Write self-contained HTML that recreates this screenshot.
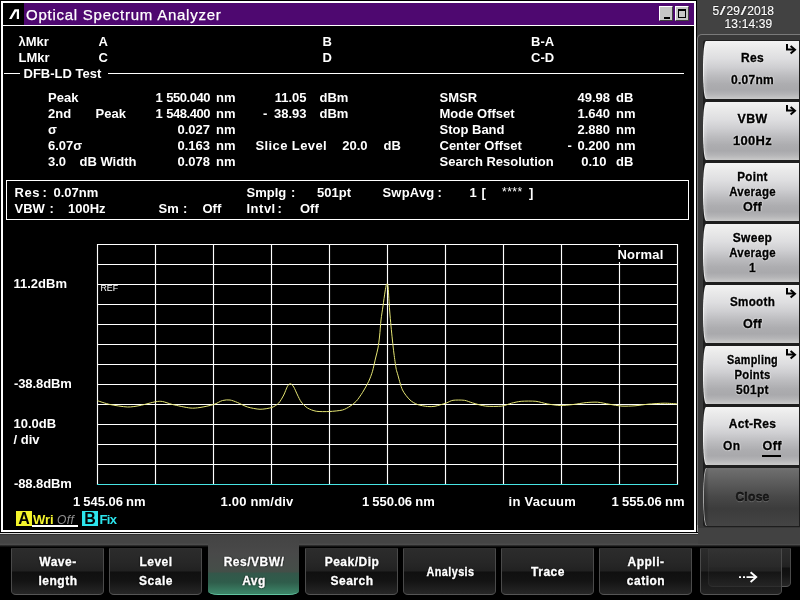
<!DOCTYPE html>
<html lang="en"><head><meta charset="utf-8"><title>Optical Spectrum Analyzer</title>
<style>
html,body{margin:0;padding:0}
body{width:800px;height:600px;overflow:hidden;position:relative;background:#424242;font-family:"Liberation Sans",sans-serif}
.a{position:absolute}
.t{position:absolute;white-space:pre;color:#fff;font-weight:bold;font-size:13px;line-height:16px}
.r{text-align:right}
.sl2{display:inline-block;width:7.4px;text-align:center;transform:scaleX(1.7)}
.win{position:absolute;left:1px;top:1px;width:691px;height:527px;border:2px solid #fff;border-bottom-width:2px;background:#000;outline:1px solid #000}
.sb{position:absolute;left:702.5px;width:96.5px;height:58.5px;border-radius:3px 0 0 3px / 26px 0 0 26px;
 box-shadow:inset 1px 0 0 rgba(255,255,255,.55);
 background:linear-gradient(to right,rgba(255,255,255,.28) 0,rgba(255,255,255,.12) 3px,rgba(255,255,255,0) 5px),linear-gradient(to bottom,#f3f3f3 0,#eaeaea 12%,#dedee0 30%,#cfcfd2 45%,#bcbcbf 60%,#adadb0 74%,#a9a9ac 84%,#b5b5b7 92%,#c9c9c9 100%)}
.sl{position:absolute;white-space:pre;left:704px;width:97px;text-align:center;color:#000;font-weight:bold;font-size:12px;line-height:15px;letter-spacing:.3px;-webkit-text-stroke:.35px #000;text-shadow:0 0 2px #fff,0 0 1.5px #fff,0 0 1px #fff}
.bb{position:absolute;top:548px;width:93px;height:47px;border-radius:1px 1px 5px 5px / 1px 1px 4px 4px;border:1px solid #4a4a4a;border-top-color:#2e2e2e;border-bottom-color:#555;box-sizing:border-box;
 background:linear-gradient(to bottom,#2c2c2c 0,#272727 30%,#212121 49%,#0f0f0f 51%,#131313 70%,#262626 100%)}
.bl{position:absolute;white-space:pre;width:93px;text-align:center;color:#fff;font-weight:bold;font-size:12px;line-height:15px;letter-spacing:.5px;-webkit-text-stroke:.3px #fff;text-shadow:0 0 2px #000,0 0 1px #000}
</style></head>
<body>
<div id="screen" style="position:absolute;left:0;top:0;width:800px;height:600px;will-change:transform">
<div class="win"></div>
<div class="a" style="left:3px;top:3px;width:21px;height:21.5px;background:#000"></div>
<div class="a" style="left:24px;top:3px;width:670px;height:21.5px;background:#4e0870"></div>
<div class="a" style="left:3px;top:24.5px;width:691px;height:1.5px;background:#fff"></div>
<svg class="a" style="left:8px;top:8px" width="13" height="13" viewBox="0 0 13 13"><path d="M1 11 L6.6 1.2 L11 1.2 L11 11 L8.8 11 L8.8 3.4 L8 3.4 L3.6 11 Z" fill="#fff"/></svg>
<div class="a" style="left:26px;top:6px;font-size:15px;line-height:18px;color:#fff;white-space:pre;letter-spacing:.75px;-webkit-text-stroke:.25px #fff">Optical Spectrum Analyzer</div>
<div class="a" style="left:659px;top:6px;width:14px;height:15px;background:#c6c6c6;box-sizing:border-box;border:1px solid;border-color:#fff #404040 #404040 #fff"><div class="a" style="left:4px;top:10px;width:6px;height:2px;background:#000"></div></div>
<div class="a" style="left:675px;top:6px;width:14px;height:15px;background:#c6c6c6;box-sizing:border-box;border:1px solid;border-color:#fff #404040 #404040 #fff"><div class="a" style="left:2px;top:2px;width:8px;height:9px;box-sizing:border-box;border:1px solid #000;border-top-width:2px"></div></div>
<span class="t " style="top:33.5px;left:18.5px;">λMkr</span>
<span class="t " style="top:33.5px;left:98.5px;">A</span>
<span class="t " style="top:33.5px;left:322.5px;">B</span>
<span class="t " style="top:33.5px;left:531px;">B-A</span>
<span class="t " style="top:49.5px;left:18.5px;">LMkr</span>
<span class="t " style="top:49.5px;left:98.5px;">C</span>
<span class="t " style="top:49.5px;left:322.5px;">D</span>
<span class="t " style="top:49.5px;left:531px;">C-D</span>
<div class="a" style="left:4px;top:73px;width:16px;height:1px;background:#fff"></div>
<div class="a" style="left:108px;top:73px;width:576px;height:1px;background:#fff"></div>
<span class="t " style="top:66px;left:23.5px;">DFB-LD Test</span>
<span class="t " style="top:90px;left:48px;">Peak</span>
<span class="t " style="top:106px;left:48px;">2nd</span>
<span class="t " style="top:106px;left:95.5px;">Peak</span>
<span class="t " style="top:122px;left:48px;">σ</span>
<span class="t " style="top:138px;left:48px;">6.07σ</span>
<span class="t " style="top:154px;left:48px;">3.0</span>
<span class="t " style="top:154px;left:79.5px;">dB Width</span>
<span class="t " style="top:90px;right:590px;letter-spacing:-0.45px;word-spacing:.8px;">1 550.040</span>
<span class="t " style="top:90px;left:216px;">nm</span>
<span class="t " style="top:106px;right:590px;letter-spacing:-0.45px;word-spacing:.8px;">1 548.400</span>
<span class="t " style="top:106px;left:216px;">nm</span>
<span class="t " style="top:122px;right:590px;">0.027</span>
<span class="t " style="top:122px;left:216px;">nm</span>
<span class="t " style="top:138px;right:590px;">0.163</span>
<span class="t " style="top:138px;left:216px;">nm</span>
<span class="t " style="top:154px;right:590px;">0.078</span>
<span class="t " style="top:154px;left:216px;">nm</span>
<span class="t " style="top:90px;right:493.5px;">11.05</span>
<span class="t " style="top:90px;left:319.5px;">dBm</span>
<span class="t " style="top:106px;left:263px;">-</span>
<span class="t " style="top:106px;right:493.5px;">38.93</span>
<span class="t " style="top:106px;left:319.5px;">dBm</span>
<span class="t " style="top:138px;left:255.5px;letter-spacing:0.4px;">Slice Level</span>
<span class="t " style="top:138px;right:432.5px;">20.0</span>
<span class="t " style="top:138px;left:383.5px;">dB</span>
<span class="t " style="top:90px;left:439.5px;">SMSR</span>
<span class="t " style="top:90px;right:190px;">49.98</span>
<span class="t " style="top:90px;left:616px;">dB</span>
<span class="t " style="top:106px;left:439.5px;">Mode Offset</span>
<span class="t " style="top:106px;right:190px;">1.640</span>
<span class="t " style="top:106px;left:616px;">nm</span>
<span class="t " style="top:122px;left:439.5px;">Stop Band</span>
<span class="t " style="top:122px;right:190px;">2.880</span>
<span class="t " style="top:122px;left:616px;">nm</span>
<span class="t " style="top:138px;left:439.5px;">Center Offset</span>
<span class="t " style="top:138px;right:190px;">0.200</span>
<span class="t " style="top:138px;left:616px;">nm</span>
<span class="t " style="top:154px;left:439.5px;">Search Resolution</span>
<span class="t " style="top:154px;right:193.5px;">0.10</span>
<span class="t " style="top:154px;left:616px;">dB</span>
<span class="t " style="top:138px;left:567.5px;">-</span>
<div class="a" style="left:6px;top:180px;width:683px;height:40px;box-sizing:border-box;border:1px solid #fff"></div>
<span class="t " style="top:185px;left:14.5px;letter-spacing:0.6px;">Res</span>
<span class="t " style="top:185px;left:42.5px;">:</span>
<span class="t " style="top:185px;left:53.5px;">0.07nm</span>
<span class="t " style="top:200.5px;left:14.5px;">VBW</span>
<span class="t " style="top:200.5px;left:49.5px;">:</span>
<span class="t " style="top:200.5px;left:68px;">100Hz</span>
<span class="t " style="top:200.5px;left:158.5px;">Sm</span>
<span class="t " style="top:200.5px;left:183px;">:</span>
<span class="t " style="top:200.5px;left:202.5px;">Off</span>
<span class="t " style="top:185px;left:246.5px;">Smplg</span>
<span class="t " style="top:185px;left:291px;">:</span>
<span class="t " style="top:185px;left:317px;">501pt</span>
<span class="t " style="top:200.5px;left:246.5px;letter-spacing:0.5px;">Intvl</span>
<span class="t " style="top:200.5px;left:277.5px;">:</span>
<span class="t " style="top:200.5px;left:300px;">Off</span>
<span class="t " style="top:185px;left:382.5px;letter-spacing:0.2px;">SwpAvg</span>
<span class="t " style="top:185px;left:437.5px;">:</span>
<span class="t " style="top:185px;left:469.5px;">1</span>
<span class="t " style="top:185px;left:481.5px;">[</span>
<span class="t " style="top:183.5px;left:502px;font-size:12px;letter-spacing:.5px;font-weight:normal;">****</span>
<span class="t " style="top:185px;left:529px;">]</span>
<svg class="a" style="left:0;top:0" width="800" height="600" viewBox="0 0 800 600"><line x1="97.5" y1="244" x2="97.5" y2="485" stroke="#fff" stroke-width="1.15"/><line x1="155.5" y1="244" x2="155.5" y2="485" stroke="#fff" stroke-width="1.15"/><line x1="213.5" y1="244" x2="213.5" y2="485" stroke="#fff" stroke-width="1.15"/><line x1="271.5" y1="244" x2="271.5" y2="485" stroke="#fff" stroke-width="1.15"/><line x1="329.5" y1="244" x2="329.5" y2="485" stroke="#fff" stroke-width="1.15"/><line x1="387.5" y1="244" x2="387.5" y2="485" stroke="#fff" stroke-width="1.15"/><line x1="445.5" y1="244" x2="445.5" y2="485" stroke="#fff" stroke-width="1.15"/><line x1="503.5" y1="244" x2="503.5" y2="485" stroke="#fff" stroke-width="1.15"/><line x1="561.5" y1="244" x2="561.5" y2="485" stroke="#fff" stroke-width="1.15"/><line x1="619.5" y1="244" x2="619.5" y2="485" stroke="#fff" stroke-width="1.15"/><line x1="677.5" y1="244" x2="677.5" y2="485" stroke="#fff" stroke-width="1.15"/><line x1="97" y1="244.5" x2="678" y2="244.5" stroke="#fff" stroke-width="1.15"/><line x1="97" y1="264.5" x2="678" y2="264.5" stroke="#fff" stroke-width="1.15"/><line x1="97" y1="284.5" x2="678" y2="284.5" stroke="#fff" stroke-width="1.15"/><line x1="97" y1="304.5" x2="678" y2="304.5" stroke="#fff" stroke-width="1.15"/><line x1="97" y1="324.5" x2="678" y2="324.5" stroke="#fff" stroke-width="1.15"/><line x1="97" y1="344.5" x2="678" y2="344.5" stroke="#fff" stroke-width="1.15"/><line x1="97" y1="364.5" x2="678" y2="364.5" stroke="#fff" stroke-width="1.15"/><line x1="97" y1="384.5" x2="678" y2="384.5" stroke="#fff" stroke-width="1.15"/><line x1="97" y1="404.5" x2="678" y2="404.5" stroke="#fff" stroke-width="1.15"/><line x1="97" y1="424.5" x2="678" y2="424.5" stroke="#fff" stroke-width="1.15"/><line x1="97" y1="444.5" x2="678" y2="444.5" stroke="#fff" stroke-width="1.15"/><line x1="97" y1="464.5" x2="678" y2="464.5" stroke="#fff" stroke-width="1.15"/><line x1="97" y1="484.5" x2="678" y2="484.5" stroke="#48e4e4" stroke-width="1.15"/><rect x="616" y="247" width="49" height="15" fill="#000"/><path fill="none" stroke="#e6e674" stroke-width="1" stroke-linejoin="round" d="M97.5 400.75 C99.17 401.25 106.00 403.67 110 404.5 C114.00 405.33 123.50 406.87 127.5 407 C131.50 407.13 136.27 406.20 140 405.5 C143.73 404.80 152.50 402.28 155.5 401.75 C158.50 401.22 160.23 401.13 162.5 401.5 C164.77 401.87 168.83 403.63 172.5 404.5 C176.17 405.37 186.33 407.60 190 408 C193.67 408.40 196.83 407.97 200 407.5 C203.17 407.03 210.75 405.43 213.75 404.5 C216.75 403.57 220.33 401.10 222.5 400.5 C224.67 399.90 228.00 399.73 230 400 C232.00 400.27 235.17 401.57 237.5 402.5 C239.83 403.43 244.50 406.10 247.5 407 C250.50 407.90 256.77 409.18 260 409.25 C263.23 409.32 269.25 408.33 271.75 407.5 C274.25 406.67 277.15 404.67 278.75 403 C280.35 401.33 282.58 397.23 283.75 395 C284.92 392.77 286.60 387.75 287.5 386.25 C288.40 384.75 289.67 383.65 290.5 383.75 C291.33 383.85 292.82 385.50 293.75 387 C294.68 388.50 296.50 393.00 297.5 395 C298.50 397.00 299.92 400.27 301.25 402 C302.58 403.73 305.50 406.77 307.5 408 C309.50 409.23 313.32 410.78 316.25 411.25 C319.18 411.72 326.00 411.67 329.5 411.5 C333.00 411.33 339.77 410.70 342.5 410 C345.23 409.30 348.17 407.42 350 406.25 C351.83 405.08 354.58 403.08 356.25 401.25 C357.92 399.42 360.83 395.17 362.5 392.5 C364.17 389.83 367.42 384.08 368.75 381.25 C370.08 378.42 371.59 374.35 372.5 371.25 C373.41 368.15 374.87 361.10 375.6 358 C376.33 354.90 377.47 350.93 378 348 C378.53 345.07 379.20 339.73 379.6 336 C380.00 332.27 380.55 324.00 381 320 C381.45 316.00 382.47 309.73 383 306 C383.53 302.27 384.55 294.87 385 292 C385.45 289.13 386.08 285.50 386.4 284.5 C386.72 283.50 387.16 284.03 387.4 284.5 C387.64 284.97 387.91 284.60 388.2 288 C388.49 291.40 389.23 304.93 389.6 310 C389.97 315.07 390.63 322.00 391 326 C391.37 330.00 392.00 336.27 392.4 340 C392.80 343.73 393.52 350.27 394 354 C394.48 357.73 395.53 365.37 396 368 C396.47 370.63 396.63 370.82 397.5 373.75 C398.37 376.68 400.83 386.50 402.5 390 C404.17 393.50 408.00 398.07 410 400 C412.00 401.93 415.17 403.63 417.5 404.5 C419.83 405.37 425.17 406.27 427.5 406.5 C429.83 406.73 432.50 406.72 435 406.25 C437.50 405.78 443.85 403.79 446.25 403 C448.65 402.21 450.58 400.66 453 400.3 C455.42 399.94 461.80 399.95 464.4 400.3 C467.00 400.65 469.69 402.13 472.5 402.9 C475.31 403.67 481.61 405.67 485.5 406.1 C489.39 406.53 498.23 406.49 501.7 406.1 C505.17 405.71 508.90 403.84 511.5 403.2 C514.10 402.56 517.95 401.55 521.2 401.3 C524.45 401.05 532.43 400.95 535.9 401.3 C539.37 401.65 543.96 403.34 547.2 403.9 C550.44 404.46 556.73 405.42 560.2 405.5 C563.67 405.58 569.73 404.89 573.2 404.5 C576.67 404.11 582.95 402.91 586.2 402.6 C589.45 402.29 594.56 401.99 597.6 402.2 C600.64 402.41 605.75 403.68 609 404.2 C612.25 404.72 618.53 405.89 622 406.1 C625.47 406.31 631.53 406.05 635 405.8 C638.47 405.55 644.11 404.55 648 404.2 C651.89 403.85 660.31 403.24 664.2 403.2 C668.09 403.16 675.47 403.81 677.2 403.9"/></svg>
<span class="t " style="top:276px;left:13.5px;">11.2dBm</span>
<span class="t " style="top:376px;left:14px;letter-spacing:-0.1px;">-38.8dBm</span>
<span class="t " style="top:415.5px;left:13.5px;">10.0dB</span>
<span class="t " style="top:431.5px;left:13.5px;">/ div</span>
<span class="t " style="top:476px;left:14px;letter-spacing:-0.1px;">-88.8dBm</span>
<span class="a" style="left:100.5px;top:283px;font-size:8.8px;line-height:10px;color:#fff;white-space:pre">REF</span>
<span class="t " style="top:246.5px;left:617.5px;letter-spacing:0.2px;">Normal</span>
<span class="t " style="top:493.5px;left:73px;word-spacing:-.6px;">1 545.06 nm</span>
<span class="t " style="top:493.5px;left:220.5px;letter-spacing:0.2px;">1.00 nm/div</span>
<span class="t " style="top:493.5px;left:362px;word-spacing:-.5px;">1 550.06 nm</span>
<span class="t " style="top:493.5px;left:508.5px;letter-spacing:0.3px;">in Vacuum</span>
<span class="t " style="top:493.5px;right:115.5px;word-spacing:-.4px;">1 555.06 nm</span>
<div class="a" style="left:16px;top:511px;width:16px;height:15px;background:#f4f42c"></div>
<span class="a" style="left:18.2px;top:509.5px;font-weight:bold;font-size:16px;line-height:17px;color:#000">A</span>
<div class="a" style="left:32px;top:524.5px;width:46px;height:2px;background:#fff"></div>
<span class="t " style="top:511.5px;left:33px;color:#f4f42c;">Wri</span>
<span class="a" style="left:57px;top:512.5px;font-size:12px;line-height:15px;font-style:italic;color:#909090;white-space:pre;letter-spacing:.4px">Off</span>
<div class="a" style="left:82px;top:511px;width:16px;height:15px;background:#2ce4ec"></div>
<span class="a" style="left:84.2px;top:509.5px;font-weight:bold;font-size:16px;line-height:17px;color:#000">B</span>
<span class="t " style="top:511.5px;left:99.5px;letter-spacing:-0.6px;color:#2ce4ec;">Fix</span>
<span class="a" style="left:712.5px;top:3.5px;font-size:12px;line-height:14px;color:#fff;white-space:pre;-webkit-text-stroke:.2px #fff;text-shadow:0 0 1px #000,0 0 1px #000">5<span class="sl2">/</span>29<span class="sl2">/</span>2018</span>
<span class="a" style="left:724.5px;top:17px;letter-spacing:.15px;font-size:12px;line-height:14px;color:#fff;white-space:pre;-webkit-text-stroke:.2px #fff;text-shadow:0 0 1px #000,0 0 1px #000">13:14:39</span>
<div class="a" style="left:697px;top:34px;width:110px;height:494px;box-sizing:border-box;border:1px solid #7a7a7a;border-bottom:none;border-radius:5px 0 0 0;background:#383838"></div>
<div class="a" style="left:697px;top:525px;width:1px;height:9px;background:#9a9a9a"></div>
<div class="a" style="left:703px;top:40px;width:97px;height:487px;background:#1e1e1e;border-radius:3px 0 0 3px"></div>
<div class="sb" style="top:40.75px"></div>
<div class="sb" style="top:101.75px"></div>
<div class="sb" style="top:162.75px"></div>
<div class="sb" style="top:223.75px"></div>
<div class="sb" style="top:284.75px"></div>
<div class="sb" style="top:345.75px"></div>
<div class="sb" style="top:406.75px"></div>
<div class="sb" style="top:467.75px;background:linear-gradient(to right,rgba(0,0,0,.3) 0,rgba(0,0,0,0) 6px),linear-gradient(to bottom,#707070 0,#5c5c5c 25%,#484848 50%,#3c3c3c 70%,#444 100%)"></div>
<span class="sl" style="top:51px;">Res</span>
<span class="sl" style="top:73.25px;">0.07nm</span>
<span class="sl" style="top:112px;transform:scaleX(1.03);">VBW</span>
<span class="sl" style="top:134px;transform:scaleX(1.08);">100Hz</span>
<span class="sl" style="top:170px;transform:scaleX(0.97);">Point</span>
<span class="sl" style="top:185px;transform:scaleX(0.95);">Average</span>
<span class="sl" style="top:200px;transform:scaleX(1.05);">Off</span>
<span class="sl" style="top:231px;">Sweep</span>
<span class="sl" style="top:246px;transform:scaleX(0.95);">Average</span>
<span class="sl" style="top:261px;">1</span>
<span class="sl" style="top:295px;transform:scaleX(0.97);">Smooth</span>
<span class="sl" style="top:317px;transform:scaleX(1.05);">Off</span>
<span class="sl" style="top:353px;transform:scaleX(0.9);">Sampling</span>
<span class="sl" style="top:368px;transform:scaleX(0.94);">Points</span>
<span class="sl" style="top:383px;">501pt</span>
<span class="sl" style="top:417px;">Act-Res</span>
<span class="sl" style="top:439px;left:723px;width:auto;">On</span>
<span class="sl" style="top:439px;left:762.5px;width:auto;transform:scaleX(1.05);">Off</span>
<div class="a" style="left:762px;top:455px;width:19px;height:2px;background:#000"></div>
<span class="sl" style="top:489.5px;color:#1c1c1c;text-shadow:0 1px 1px #777;">Close</span>
<svg class="a" style="left:784px;top:42px" width="14" height="14" viewBox="0 0 14 14"><path d="M3 2 V7.6 H10" fill="none" stroke="#000" stroke-width="2"/><path d="M6.6 4 L11 7.8 L6.6 11.6" fill="none" stroke="#000" stroke-width="2"/></svg>
<svg class="a" style="left:784px;top:103px" width="14" height="14" viewBox="0 0 14 14"><path d="M3 2 V7.6 H10" fill="none" stroke="#000" stroke-width="2"/><path d="M6.6 4 L11 7.8 L6.6 11.6" fill="none" stroke="#000" stroke-width="2"/></svg>
<svg class="a" style="left:784px;top:286px" width="14" height="14" viewBox="0 0 14 14"><path d="M3 2 V7.6 H10" fill="none" stroke="#000" stroke-width="2"/><path d="M6.6 4 L11 7.8 L6.6 11.6" fill="none" stroke="#000" stroke-width="2"/></svg>
<svg class="a" style="left:784px;top:347px" width="14" height="14" viewBox="0 0 14 14"><path d="M3 2 V7.6 H10" fill="none" stroke="#000" stroke-width="2"/><path d="M6.6 4 L11 7.8 L6.6 11.6" fill="none" stroke="#000" stroke-width="2"/></svg>
<div class="a" style="left:0;top:532px;width:800px;height:68px;background:linear-gradient(to bottom,#000 0,#000 1px,#d8d8d8 1px,#d8d8d8 2px,#303030 2px,#303030 3px,#444 3.5px,#444 11px,#4c4c4c 12.5px,#1a1a1a 14px,#000 15.5px,#000 100%)"></div>
<div class="a" style="left:698px;top:528px;width:102px;height:16px;background:#424242"></div>
<div class="bb" style="left:10.5px"></div>
<span class="bl" style="left:11.5px;top:554.5px">Wave-</span>
<span class="bl" style="left:11.5px;top:573.5px">length</span>
<div class="bb" style="left:108.5px"></div>
<span class="bl" style="left:109.5px;top:554.5px">Level</span>
<span class="bl" style="left:109.5px;top:573.5px">Scale</span>
<div class="a" style="left:207.5px;top:535.5px;width:91px;height:59.5px;border-radius:0 0 10px 10px / 0 0 4px 4px;border-bottom:1.5px solid #62c4a0;box-sizing:border-box;background:linear-gradient(to bottom,#444 0,#464646 14%,#494949 30%,#464d49 55%,#434f48 62%,#33574a 64%,#2f5d4b 80%,#3b8165 97%,#3b8165 100%)"></div>
<span class="bl" style="left:207.5px;top:554.5px">Res/VBW/</span>
<span class="bl" style="left:207.5px;top:573.5px">Avg</span>
<div class="bb" style="left:304.5px"></div>
<span class="bl" style="left:305.5px;top:554.5px">Peak/Dip</span>
<span class="bl" style="left:305.5px;top:573.5px">Search</span>
<div class="bb" style="left:402.5px"></div>
<span class="bl" style="left:403.5px;top:565px;transform:scaleX(.9);">Analysis</span>
<div class="bb" style="left:500.5px"></div>
<span class="bl" style="left:501.5px;top:565px;">Trace</span>
<div class="bb" style="left:598.5px"></div>
<span class="bl" style="left:599.5px;top:554.5px">Appli-</span>
<span class="bl" style="left:599.5px;top:573.5px">cation</span>
<div class="bb" style="left:707.5px;width:83px;top:548px;height:39px"></div>
<div class="bb" style="left:700px;width:82px;top:548px;height:46.5px;background:linear-gradient(to bottom,rgba(52,52,52,.85) 0,rgba(40,40,40,.85) 49%,rgba(22,22,22,.8) 51%,rgba(44,44,44,.8) 100%)"></div>
<svg class="a" style="left:736px;top:569px" width="24" height="16" viewBox="0 0 24 16"><path d="M3 7.2h2v1.8h-2z M7 7.2h2v1.8h-2z M10.5 7.2h9v1.8h-9z" fill="#fff"/><path d="M14.6 3.2 L20.2 8.1 L14.6 13" fill="none" stroke="#fff" stroke-width="1.9"/></svg>
</div>
</body></html>
